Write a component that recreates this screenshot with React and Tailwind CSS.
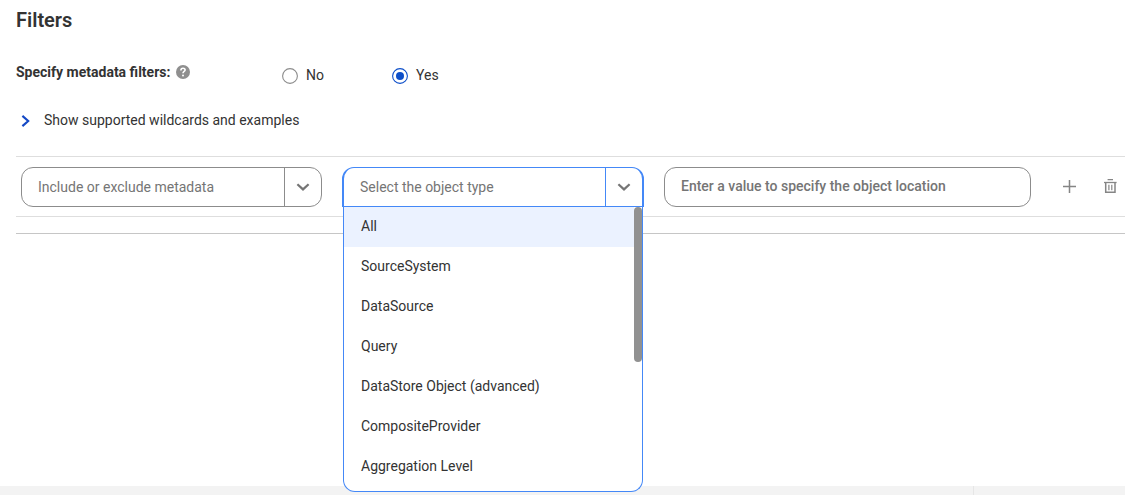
import { useState } from 'react';

const objectTypes = [
  'All',
  'SourceSystem',
  'DataSource',
  'Query',
  'DataStore Object (advanced)',
  'CompositeProvider',
  'Aggregation Level',
];

const ChevronDown = () => (
  <svg className="w-[14px] h-[8px]" viewBox="0 0 14 8" fill="none" stroke="#757575" strokeWidth="2.2">
    <path d="M1.4 1.2L7 6.4L12.6 1.2" />
  </svg>
);

const Radio = ({ label, checked, onChange }) => (
  <button type="button" role="radio" aria-checked={checked} onClick={onChange} className="flex items-center gap-2 w-[110px]">
    <svg className="w-4 h-4 mt-0.5 shrink-0" viewBox="0 0 16 16" fill="none">
      <circle cx="8" cy="8" r="7.4" stroke={checked ? '#0d4fc9' : '#8c8c8c'} strokeWidth="1.1" />
      {checked && <circle cx="8" cy="8" r="4" fill="#0d4fc9" />}
    </svg>
    <span className="leading-5">{label}</span>
  </button>
);

const App = () => {
  const [useFilters, setUseFilters] = useState(true);
  const [location, setLocation] = useState('');

  return (
    <div className="h-[495px] overflow-hidden flex flex-col bg-white text-[#333333] text-[14px] font-['Roboto',sans-serif]">
      <div className="pl-4 grow">
        <h1 className="h-[60px] pt-[6px] text-[20px] leading-7 font-semibold">Filters</h1>

        <div className="flex h-[50px]">
          <div className="flex items-start w-[266px] pt-[2px]">
            <span className="leading-5 font-bold">Specify metadata filters:</span>
            <svg className="w-[14px] h-[14px] ml-[6px] mt-[3px]" viewBox="0 0 14 14" fill="none">
              <circle cx="7" cy="7" r="7" fill="#8f8f8f" />
              <path d="M4.9 5.4C4.9 4 5.8 3.2 7 3.2S9.1 4 9.1 5C9.1 6.4 7 6.4 7 8.2" stroke="#fff" strokeWidth="1.6" />
              <circle cx="7" cy="10.4" r="1" fill="#fff" />
            </svg>
          </div>
          <div role="radiogroup" className="flex items-start pt-[5px]">
            <Radio label="No" checked={!useFilters} onChange={() => setUseFilters(false)} />
            <Radio label="Yes" checked={useFilters} onChange={() => setUseFilters(true)} />
          </div>
        </div>

        <button type="button" className="flex items-center h-5">
          <svg className="w-[9px] h-[12px] mt-0.5 ml-[5px] mr-[14px]" viewBox="0 0 9 12" fill="none" stroke="#1449c5" strokeWidth="2.1">
            <path d="M1.4 0.9L7.2 6L1.4 11.1" />
          </svg>
          <span className="leading-5">Show supported wildcards and examples</span>
        </button>

        {/* Filter row */}
        <div className="mt-[26px] h-[61px] pl-[5px] pt-[10px] flex border-y border-[#dedede]">
          <div className="flex w-[301px] h-10 border border-[#8c8c8c] rounded-[12px] text-[#757575]">
            <span className="grow pl-4 leading-[39px]">Include or exclude metadata</span>
            <span className="flex items-center justify-center w-[37px] border-l border-[#8c8c8c]">
              <ChevronDown />
            </span>
          </div>

          <div className="relative ml-5 w-[302px] h-10">
            <div className="flex h-10 border border-x-2 border-[#4488f7] rounded-t-[12px] text-[#757575]">
              <span className="grow pl-4 leading-[39px]">Select the object type</span>
              <span className="flex items-center justify-center w-[37px] border-l border-[#4488f7]">
                <ChevronDown />
              </span>
            </div>
            {/* Object type menu */}
            <div className="absolute z-10 top-10 left-px w-[300px] h-[285px] flex border border-t-0 border-[#4488f7] rounded-b-[12px] bg-white">
              <ul className="grow">
                {objectTypes.map((type, i) => (
                  <li key={type} className={`h-10 pl-[17px] leading-[39px] ${i === 0 ? 'bg-[#ebf2ff]' : ''}`}>
                    {type}
                  </li>
                ))}
              </ul>
              <div className="w-2 h-[155px] rounded-full bg-[#919191]" />
            </div>
          </div>

          <input
            type="text"
            value={location}
            onChange={(e) => setLocation(e.target.value)}
            placeholder="Enter a value to specify the object location"
            className="ml-5 w-[367px] h-10 px-4 pb-[2px] border border-[#8c8c8c] rounded-[12px] font-medium placeholder:text-[#757575] placeholder:opacity-100"
          />

          <button type="button" aria-label="Add filter" className="ml-8 mt-[13px] w-[13px] h-[13px]">
            <svg className="w-[13px] h-[13px]" viewBox="0 0 13 13" fill="none" stroke="#858585" strokeWidth="1.5">
              <path d="M6.5 0V13M0 6.5H13" />
            </svg>
          </button>
          <button type="button" aria-label="Delete filter" className="ml-7 mt-[12px] w-[13px] h-[14px]">
            <svg className="w-[13px] h-[14px]" viewBox="0 0 13 14" fill="none" stroke="#858585">
              <path d="M3.6 0.6H9" strokeWidth="1.3" />
              <path d="M0 3.5H12.6" strokeWidth="1.3" />
              <path d="M1.7 3.5V13.3H11V3.5" strokeWidth="1.5" />
              <path d="M4.9 5.8V11.2M7.8 5.8V11.2" strokeWidth="1.2" />
            </svg>
          </button>
        </div>
        <div className="mt-4 h-px bg-[#c6c6c6]" />
      </div>

      {/* Footer strip */}
      <div className="flex h-[9px] bg-[#f3f3f3]">
        <div className="w-[974px] border-r border-[#e6e6e6]" />
      </div>
    </div>
  );
};

export default App;
